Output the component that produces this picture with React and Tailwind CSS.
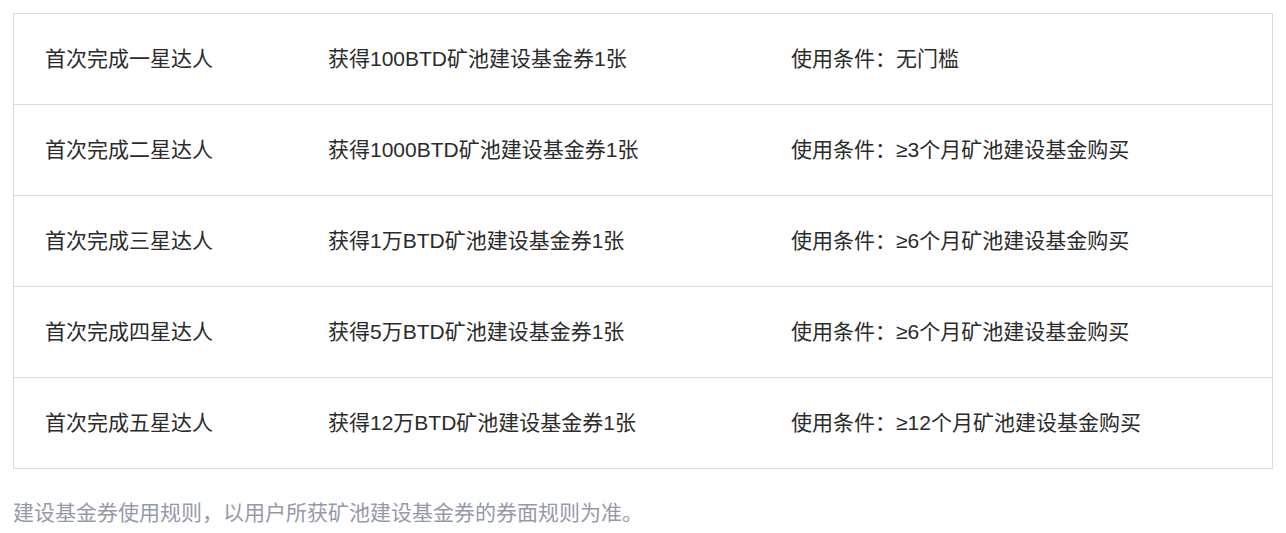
const ROWS = [
  ['首次完成一星达人', '获得100BTD矿池建设基金券1张', '使用条件：无门槛'],
  ['首次完成二星达人', '获得1000BTD矿池建设基金券1张', '使用条件：≥3个月矿池建设基金购买'],
  ['首次完成三星达人', '获得1万BTD矿池建设基金券1张', '使用条件：≥6个月矿池建设基金购买'],
  ['首次完成四星达人', '获得5万BTD矿池建设基金券1张', '使用条件：≥6个月矿池建设基金购买'],
  ['首次完成五星达人', '获得12万BTD矿池建设基金券1张', '使用条件：≥12个月矿池建设基金购买'],
]

export default function App() {
  return (
    <div
      className="bg-white px-[13px] pt-[13px] w-[1286px] h-[533px]"
      style={{ fontFamily: '"Liberation Sans", "Noto Sans CJK SC", sans-serif' }}
    >
      <div className="w-[1260px] border border-[#dcdcdc]">
        {ROWS.map(([a, b, c], i) => (
          <div
            key={a}
            className={`box-content flex items-center h-[90px] text-[21px] text-[#2b2b2b] ${i > 0 ? 'border-t border-[#dcdcdc]' : ''}`}
          >
            <div className="w-[283px] pl-[31px]">{a}</div>
            <div className="w-[463px] pl-[31px]">{b}</div>
            <div className="flex-1 pl-[31px]">{c}</div>
          </div>
        ))}
      </div>
      <p className="mt-[28px] text-[21px] text-[#959aa8]">
        建设基金券使用规则，以用户所获矿池建设基金券的券面规则为准。
      </p>
    </div>
  )
}
